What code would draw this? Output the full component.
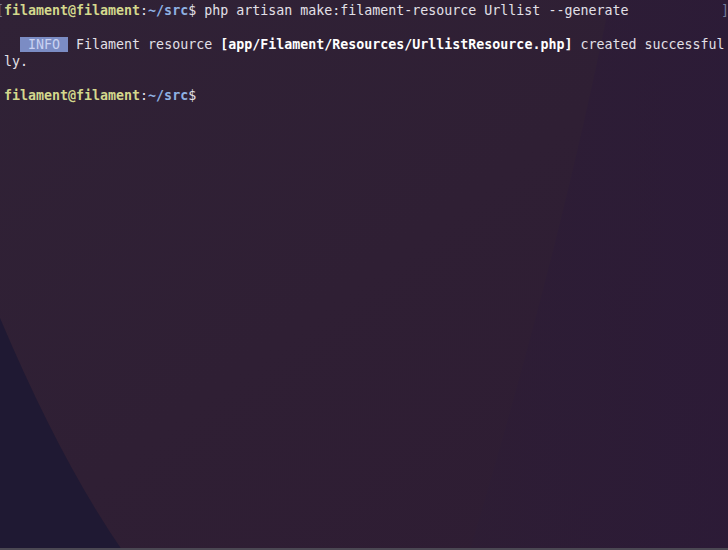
import React from "react";

const mono = { fontFamily: '"DejaVu Sans Mono", "Liberation Mono", monospace' };

export default function App() {
  return (
    <div className="relative w-[728px] h-[550px] overflow-hidden bg-[#2f2034]">
      <svg className="absolute inset-0" width="728" height="550" viewBox="0 0 728 550">
        <defs>
          <linearGradient id="g1" x1="0" y1="0" x2="1" y2="1">
            <stop offset="0" stopColor="#302236" />
            <stop offset="0.5" stopColor="#2f1f34" />
            <stop offset="1" stopColor="#2e1c33" />
          </linearGradient>
          <linearGradient id="g2" x1="0" y1="0" x2="1" y2="0">
            <stop offset="0" stopColor="#2d1d35" />
            <stop offset="1" stopColor="#2b1a38" />
          </linearGradient>
        </defs>
        <rect width="728" height="550" fill="url(#g1)" />
        <path d="M610 0 L728 0 L728 550 L470 550 Q560 250 610 0 Z" fill="url(#g2)" opacity="0.7" />
        <path d="M0 318 Q60 460 122 550 L0 550 Z" fill="#1f1933" />
      </svg>
      <div className="absolute left-0 right-0 bottom-0 h-[2px] bg-[#4b4853]" />
      <div
        className="relative pt-[2px] pl-[4px] text-[13.3px] leading-[17px] text-[#e3e0e8] whitespace-pre"
        style={mono}
      >
        <span className="absolute left-[-4px] top-[2px] text-[#737a99]">[</span>
        <span className="absolute left-[721px] top-[2px] text-[#737a99]">]</span>
        <div>
          <span className="font-bold text-[#d3d88d]">filament@filament</span>
          <span>:</span>
          <span className="font-bold text-[#8fb1e3]">~/src</span>
          <span>$ php artisan make:filament-resource Urllist --generate</span>
        </div>
        <div>{" "}</div>
        <div>
          <span>{"  "}</span>
          <span className="bg-[#7b8cc4] text-[#c9d2f2]">{" INFO "}</span>
          <span>{" Filament resource "}</span>
          <span className="font-bold text-white">[app/Filament/Resources/UrllistResource.php]</span>
          <span>{" created successful"}</span>
        </div>
        <div>ly.</div>
        <div>{" "}</div>
        <div>
          <span className="font-bold text-[#d3d88d]">filament@filament</span>
          <span>:</span>
          <span className="font-bold text-[#8fb1e3]">~/src</span>
          <span>$</span>
        </div>
      </div>
    </div>
  );
}
